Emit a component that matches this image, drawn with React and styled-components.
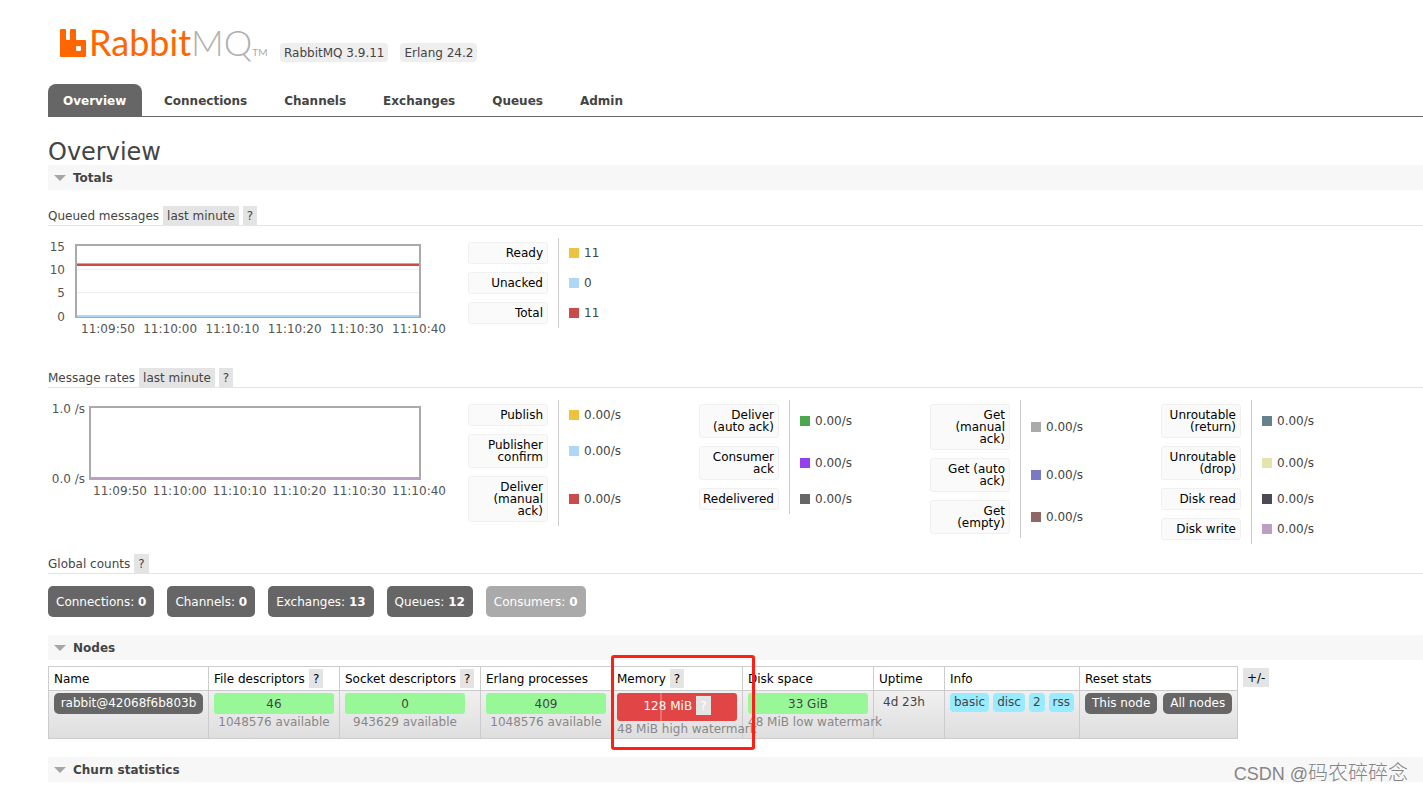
import React from "react";
import styled, { createGlobalStyle } from "styled-components";

const GlobalStyle = createGlobalStyle`
  * { box-sizing: border-box; }
  body {
    margin: 0;
    background: #fff;
    color: #444;
    font: 12px/18px Verdana, "DejaVu Sans", sans-serif;
    overflow-x: hidden;
  }
  button { font: inherit; border: 0; margin: 0; cursor: pointer; }
  a { text-decoration: none; }
`;

const Page = styled.div`
  position: relative;
  min-height: 100vh;
  padding-left: 48px;
`;

const Header = styled.header`
  display: flex;
  align-items: flex-end;
  gap: 12px;
  height: 62px;
  padding-left: 12px;
`;

const Logo = styled.a`
  display: flex;
  align-items: flex-end;
  width: 208px;
  height: 42px;
  color: #f60;
`;

const LogoMark = styled.svg`
  flex: none;
  margin-bottom: 4px;
`;

const LogoText = styled.span`
  padding-left: ${(p) => (p.$muted ? 0 : 1)}px;
  font: ${(p) => (p.$muted ? 300 : 400)} 36px/40px Lato, sans-serif;
  color: ${(p) => (p.$muted ? "#b0b0b0" : "#f60")};
`;

const Trademark = styled.span`
  margin-left: auto;
  padding-right: 3px;
  font: 10px/20px Lato, sans-serif;
  color: #aaa;
`;

const Badge = styled.span`
  padding: 2px 4px 0;
  border-radius: 4px;
  background: #eee;
  line-height: 17px;
`;

const Tabs = styled.nav`
  display: flex;
  gap: 7px;
  margin-top: 22px;
  border-bottom: 1px solid #666;
`;

const Tab = styled.a`
  padding: 2px 15px 0;
  border-radius: 8px 8px 0 0;
  font-weight: bold;
  line-height: 30px;
  color: ${(p) => (p.$active ? "#fff" : "#444")};
  background: ${(p) => (p.$active ? "#666" : "transparent")};

  &:first-child { min-width: 94px; }
`;

const Title = styled.h1`
  margin: 22px 0 0;
  font-size: 24px;
  font-weight: normal;
  line-height: 26px;
`;

const SectionTitle = styled.h2`
  display: flex;
  align-items: center;
  gap: 7px;
  margin: ${(p) => (p.$first ? 0 : 18)}px 0 0;
  padding: 2px 0 0 6px;
  background: #f7f7f7;
  font-size: 12px;
  line-height: 23px;
`;

const SubTitle = styled.h3`
  display: flex;
  align-items: baseline;
  gap: 4px;
  margin: ${(p) => (p.$first ? 16 : 0)}px 0 0;
  border-bottom: 1px solid #e4e4e4;
  font-size: 12px;
  font-weight: normal;
  line-height: 17px;
`;

const Popup = styled.button`
  padding: 2px 4px 0;
  background: #e4e4e4;
  color: inherit;
  line-height: 17px;
`;

const Stats = styled.div`
  display: flex;
  padding: 12px 0 10px;
`;

const ChartBox = styled.div`
  flex: 0 0 420px;
  min-height: 120px;
`;

const ChartSvg = styled.svg`
  display: block;
  font-size: 12px;
  fill: #545454;
`;

const LegendSlot = styled.div`
  flex: 0 0 231px;
`;

const Legend = styled.table`
  border-collapse: collapse;

  th {
    padding: 4px 10px 4px 0;
    font-weight: normal;
  }
  td {
    padding: 0 0 0 10px;
    border-left: 1px solid #ccc;
  }
`;

const LegendLabel = styled.div`
  width: 80px;
  padding: 4px 4px 4px 2px;
  border: 1px solid #f0f0f0;
  border-radius: 3px;
  background: #fafafa;
  color: #000;
  line-height: 12px;
  text-align: right;
  white-space: pre;
`;

const LegendValue = styled.div`
  display: flex;
  align-items: center;
  gap: 5px;

  &::before {
    content: "";
    width: 10px;
    height: 10px;
    background: ${(p) => p.$color};
  }
`;

const Counts = styled.div`
  display: flex;
  gap: 13px;
  padding-top: 12px;
`;

const Count = styled.a`
  padding: 2px 8px 0;
  border-radius: 5px;
  background: ${(p) => (p.$disabled ? "#aaa" : "#666")};
  color: #fff;
  line-height: 29px;
`;

const TableRow = styled.div`
  display: flex;
  align-items: flex-start;
  gap: 5px;
  padding-top: 6px;
`;

const NodeTable = styled.table`
  flex: none;
  border-collapse: collapse;
  table-layout: fixed;
  width: 1190px;

  th, td {
    padding: 2px 5px;
    border: 1px solid #ccc;
    text-align: left;
    vertical-align: top;
    white-space: nowrap;
  }
  th {
    height: 24px;
    color: #000;
    font-weight: normal;
    line-height: 17px;
    vertical-align: baseline;
  }
  td { height: 48px; padding-bottom: 0; }
  tbody tr { background: linear-gradient(#f0f0f0, #dedede); }
`;

const MarkedHead = styled.th`
  position: relative;
`;

const Marker = styled.span`
  position: absolute;
  top: -12px;
  left: -1px;
  z-index: 1;
  width: 144px;
  height: 95px;
  border: 3px solid #ff2015;
  border-radius: 3px;
  pointer-events: none;
`;

const HeadInner = styled.div`
  display: flex;
  align-items: baseline;
  gap: 4px;
`;

const NodeLink = styled.a`
  display: block;
  border-radius: 5px;
  background: #666;
  color: #fff;
  line-height: 21px;
  text-align: center;
`;

const ResetButton = styled.button`
  padding: 0 7px;
  border-radius: 5px;
  background: #666;
  color: #fff;
  line-height: 21px;
`;

const Bar = styled.div`
  display: flex;
  align-items: ${(p) => (p.$alarm ? "baseline" : "center")};
  justify-content: center;
  gap: 4px;
  width: 120px;
  height: ${(p) => (p.$alarm ? 28 : 21)}px;
  padding-top: ${(p) => (p.$alarm ? 3 : 0)}px;
  border-radius: 3px;
  color: ${(p) => (p.$alarm ? "#fff" : "#444")};
  background: ${(p) =>
    p.$alarm
      ? "linear-gradient(90deg, #e24545 43px, #ea7070 43px, #ea7070 45px, #e24545 45px)"
      : "#98f898"};
`;

const BarNote = styled.div`
  width: 120px;
  color: #888;
  line-height: 16px;
  text-align: center;
`;

const Uptime = styled.div`
  padding-left: 4px;
  line-height: 19px;
`;

const Chips = styled.div`
  display: flex;
  gap: 4px;
`;

const Chip = styled.span`
  padding: 0 4px;
  border-radius: 4px;
  background: #99ebff;
  line-height: 19px;
`;

const Buttons = styled.div`
  display: flex;
  gap: 6px;
`;

const ColumnsButton = styled(Popup)`
  margin-top: 2px;
  color: #000;
`;

const Watermark = styled.div`
  position: absolute;
  right: 15px;
  bottom: 5px;
  color: #858585;
  font: 300 20px/28px "Noto Sans CJK SC", sans-serif;
`;

const WatermarkLatin = styled.span`
  font: 18px "Liberation Sans", sans-serif;
`;

const tabs = ["Overview", "Connections", "Channels", "Exchanges", "Queues", "Admin"];
const times = ["11:09:50", "11:10:00", "11:10:10", "11:10:20", "11:10:30", "11:10:40"];

const queued = [
  ["Ready", "11", "#edc240"],
  ["Unacked", "0", "#afd8f8"],
  ["Total", "11", "#cb4b4b"],
];

const rates = [
  [
    ["Publish", "0.00/s", "#edc240"],
    ["Publisher\nconfirm", "0.00/s", "#afd8f8"],
    ["Deliver\n(manual\nack)", "0.00/s", "#cb4b4b"],
  ],
  [
    ["Deliver\n(auto ack)", "0.00/s", "#4da74d"],
    ["Consumer\nack", "0.00/s", "#9440ed"],
    ["Redelivered", "0.00/s", "#666666"],
  ],
  [
    ["Get\n(manual\nack)", "0.00/s", "#aaaaaa"],
    ["Get (auto\nack)", "0.00/s", "#7c79c3"],
    ["Get\n(empty)", "0.00/s", "#8e6767"],
  ],
  [
    ["Unroutable\n(return)", "0.00/s", "#67808e"],
    ["Unroutable\n(drop)", "0.00/s", "#e5e4ae"],
    ["Disk read", "0.00/s", "#4b4a55"],
    ["Disk write", "0.00/s", "#bc9fc2"],
  ],
];

const counts = [
  ["Connections", 0],
  ["Channels", 0],
  ["Exchanges", 13],
  ["Queues", 12],
  ["Consumers", 0, true],
];

const columnWidths = [160, 131, 141, 131, 131, 131, 71, 135, 158];

function Section({ children, first }) {
  return (
    <SectionTitle $first={first}>
      <svg width="12" height="8" aria-hidden="true">
        <path d="M0 0H12L6 6Z" fill="#a6a6a6" />
      </svg>
      {children}
    </SectionTitle>
  );
}

function Chart({ left, labels, labelEnd, firstTime, grid = [], lines, name }) {
  const step = (371 - firstTime) / (times.length - 1);
  return (
    <ChartBox>
      <ChartSvg width="404" height="100" role="img" aria-label={name}>
        {labels.map(([text, y]) => (
          <text key={text} x={labelEnd} y={y} textAnchor="end">{text}</text>
        ))}
        {grid.map((y) => (
          <rect key={y} x={left} y={y} width={372 - left} height="1" fill="#eee" />
        ))}
        <rect x={left} y="7" width={372 - left} height="72" fill="none" stroke="#aaa" strokeWidth="2" />
        {lines.map(([y, height, color]) => (
          <rect key={y} x={left + 1} y={y} width={370 - left} height={height} fill={color} />
        ))}
        {times.map((time, i) => (
          <text key={time} x={firstTime + i * step} y="95" textAnchor="middle">{time}</text>
        ))}
      </ChartSvg>
    </ChartBox>
  );
}

function LegendTable({ rows }) {
  return (
    <LegendSlot>
      <Legend>
        <tbody>
          {rows.map(([label, value, color]) => (
            <tr key={label}>
              <th scope="row"><LegendLabel>{label}</LegendLabel></th>
              <td><LegendValue $color={color}>{value}</LegendValue></td>
            </tr>
          ))}
        </tbody>
      </Legend>
    </LegendSlot>
  );
}

function Usage({ value, note }) {
  return (
    <td>
      <Bar>{value}</Bar>
      <BarNote>{note}</BarNote>
    </td>
  );
}

export default function App() {
  return (
    <Page>
      <GlobalStyle />
      <Header>
        <Logo href="#" aria-label="RabbitMQ">
          <LogoMark width="28" height="29" viewBox="0 0 28 29" aria-hidden="true">
            <path
              fill="#f60"
              fillRule="evenodd"
              d="M1 0H5Q6 0 6 1V10Q6 11 7 11H9Q10 11 10 10V1Q10 0 11 0H15Q16 0 16 1V10Q16 11 17 11H25Q26 11 26 12V27Q26 28 25 28H1Q0 28 0 27V1Q0 0 1 0ZM16 18V21Q16 22 17 22H20Q21 22 21 21V18Q21 17 20 17H17Q16 17 16 18Z"
            />
          </LogoMark>
          <LogoText>Rabbit</LogoText>
          <LogoText $muted>MQ</LogoText>
          <Trademark>TM</Trademark>
        </Logo>
        <Badge>RabbitMQ 3.9.11</Badge>
        <Badge>Erlang 24.2</Badge>
      </Header>
      <Tabs>
        {tabs.map((tab, i) => (
          <Tab key={tab} href="#" $active={i === 0}>{tab}</Tab>
        ))}
      </Tabs>
      <main>
        <Title>Overview</Title>
        <Section first>Totals</Section>
        <SubTitle $first>
          Queued messages <Popup>last minute</Popup><Popup>?</Popup>
        </SubTitle>
        <Stats>
          <Chart
            name="Queued messages"
            left={28}
            labelEnd={17}
            firstTime={60}
            labels={[["15", 13], ["10", 36], ["5", 59], ["0", 83]]}
            grid={[31, 54]}
            lines={[[25, 1, "#e2a07a"], [26, 2, "#cb4b4b"], [77, 2, "#afd8f8"]]}
          />
          <LegendTable rows={queued} />
        </Stats>
        <SubTitle>
          Message rates <Popup>last minute</Popup><Popup>?</Popup>
        </SubTitle>
        <Stats>
          <Chart
            name="Message rates"
            left={42}
            labelEnd={37}
            firstTime={72}
            labels={[["1.0 /s", 13], ["0.0 /s", 83]]}
            lines={[[77, 2, "#bc9fc2"]]}
          />
          {rates.map((rows) => <LegendTable key={rows[0][0]} rows={rows} />)}
        </Stats>
        <SubTitle>Global counts <Popup>?</Popup></SubTitle>
        <Counts>
          {counts.map(([label, value, disabled]) => (
            <Count key={label} href="#" $disabled={disabled}>
              {label}: <b>{value}</b>
            </Count>
          ))}
        </Counts>
        <Section>Nodes</Section>
        <TableRow>
          <NodeTable>
            <colgroup>
              {columnWidths.map((width, i) => <col key={i} width={width} />)}
            </colgroup>
            <thead>
              <tr>
                <th>Name</th>
                <th><HeadInner>File descriptors <Popup>?</Popup></HeadInner></th>
                <th><HeadInner>Socket descriptors <Popup>?</Popup></HeadInner></th>
                <th>Erlang processes</th>
                <MarkedHead>
                  <HeadInner>Memory <Popup>?</Popup></HeadInner>
                  <Marker />
                </MarkedHead>
                <th>Disk space</th>
                <th>Uptime</th>
                <th>Info</th>
                <th>Reset stats</th>
              </tr>
            </thead>
            <tbody>
              <tr>
                <td><NodeLink href="#">rabbit@42068f6b803b</NodeLink></td>
                <Usage value="46" note="1048576 available" />
                <Usage value="0" note="943629 available" />
                <Usage value="409" note="1048576 available" />
                <td>
                  <Bar $alarm>128 MiB <Popup>?</Popup></Bar>
                  <BarNote>48 MiB high watermark</BarNote>
                </td>
                <Usage value="33 GiB" note="48 MiB low watermark" />
                <td><Uptime>4d 23h</Uptime></td>
                <td>
                  <Chips>
                    <Chip>basic</Chip>
                    <Chip>disc</Chip>
                    <Chip>2</Chip>
                    <Chip>rss</Chip>
                  </Chips>
                </td>
                <td>
                  <Buttons>
                    <ResetButton>This node</ResetButton>
                    <ResetButton>All nodes</ResetButton>
                  </Buttons>
                </td>
              </tr>
            </tbody>
          </NodeTable>
          <ColumnsButton>+/-</ColumnsButton>
        </TableRow>
        <Section>Churn statistics</Section>
      </main>
      <Watermark><WatermarkLatin>CSDN @</WatermarkLatin>码农碎碎念</Watermark>
    </Page>
  );
}
